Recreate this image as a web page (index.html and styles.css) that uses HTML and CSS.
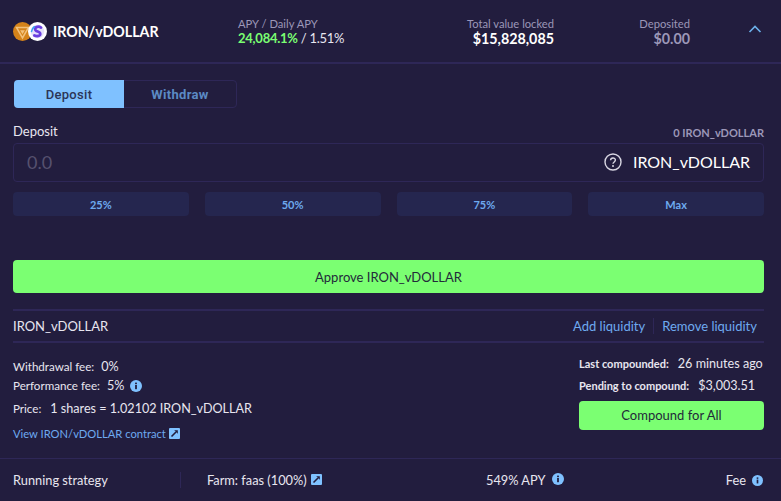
FILE: index.html
```html
<!DOCTYPE html>
<html lang="en">
<head>
  <meta charset="UTF-8">
  <title>IRON/vDOLLAR</title>
  <link rel="stylesheet" href="styles.css">
</head>
<body>
  <header class="vault-header">
    <div class="vault-name">
      <div class="token-icons">
        <svg class="token" viewBox="0 0 24 24" width="24" height="24">
          <circle cx="12" cy="12" r="12" fill="#d5831a"/>
          <path d="M4.500 7h15L12 20z" fill="none" stroke="#f3c27c" stroke-width="2"/>
          <path d="M9 10.500h6L12 15.500z" fill="#f3c27c"/>
        </svg>
        <svg class="token token-top" viewBox="0 0 24 24" width="24" height="24">
          <circle cx="12" cy="12" r="12" fill="#fff"/>
          <circle cx="12" cy="12" r="8.500" fill="#e4e0fb"/>
          <path d="M16.500 7c-3-2-7.500-1-7.500 2 0 3.500 6.500 2.500 6.500 6 0 2.500-4 3.500-7.500 2" fill="none" stroke="#6a3fe0" stroke-width="3.400" stroke-linecap="round"/>
          <path d="M4.500 12c.3-2.500 1.500-4.500 3.500-6" fill="none" stroke="#3aa0f0" stroke-width="2" stroke-linecap="round"/>
        </svg>
      </div>
      <span class="vault-title">IRON/vDOLLAR</span>
    </div>
    <div class="stat stat-apy">
      <span class="stat-label">APY / Daily APY</span>
      <span class="stat-value stat-value-small"><span class="green">24,084.1%</span> <span class="apy-rest">/ 1.51%</span></span>
    </div>
    <div class="stat stat-tvl">
      <span class="stat-label">Total value locked</span>
      <span class="stat-value">$15,828,085</span>
    </div>
    <div class="stat stat-deposited">
      <span class="stat-label">Deposited</span>
      <span class="stat-value muted">$0.00</span>
    </div>
    <svg class="chevron" viewBox="0 0 14 8" width="14" height="8">
      <path d="M1.500 7L7 1.500 12.500 7" fill="none" stroke="#6cb0ea" stroke-width="1.600"/>
    </svg>
  </header>

  <main class="vault-body">
    <div class="tabs">
      <div class="tab tab-active">Deposit</div>
      <div class="tab">Withdraw</div>
    </div>

    <div class="field-head">
      <span class="field-label">Deposit</span>
      <span class="field-balance">0 IRON_vDOLLAR</span>
    </div>
    <div class="amount-box">
      <span class="amount-placeholder">0.0</span>
      <div class="amount-token">
        <svg viewBox="0 0 18 18" width="18" height="18">
          <circle cx="9" cy="9" r="8" fill="none" stroke="#d8d6e2" stroke-width="1.400"/>
          <path d="M6.600 7.200c0-3 4.800-3 4.800-.1 0 1.900-2.400 1.800-2.400 3.700" fill="none" stroke="#d8d6e2" stroke-width="1.400"/>
          <circle cx="9" cy="13" r="1" fill="#d8d6e2"/>
        </svg>
        <span>IRON_vDOLLAR</span>
      </div>
    </div>
    <div class="percent-row">
      <div class="percent-btn">25%</div>
      <div class="percent-btn">50%</div>
      <div class="percent-btn">75%</div>
      <div class="percent-btn">Max</div>
    </div>

    <div class="approve-btn">Approve IRON_vDOLLAR</div>

    <div class="liquidity-row">
      <span>IRON_vDOLLAR</span>
      <div class="liquidity-links">
        <a href="#">Add liquidity</a>
        <a href="#">Remove liquidity</a>
      </div>
    </div>

    <div class="details">
      <div class="details-left">
        <div class="detail-line line-withdraw"><span class="detail-key">Withdrawal fee:</span><span class="detail-val">0%</span></div>
        <div class="detail-line line-perf">
          <span class="detail-key">Performance fee:</span><span class="detail-val">5%</span>
          <svg class="info-icon" viewBox="0 0 12 12" width="12" height="12"><circle cx="6" cy="6" r="6" fill="#7fc1ff"/><rect x="5.100" y="5" width="1.800" height="4.200" fill="#221d3e"/><rect x="5.100" y="2.600" width="1.800" height="1.600" fill="#221d3e"/></svg>
        </div>
        <div class="detail-line line-price"><span class="detail-key">Price:</span><span class="detail-val">1 shares = 1.02102 IRON_vDOLLAR</span></div>
        <a class="contract-link" href="#">View IRON/vDOLLAR contract
          <svg viewBox="0 0 11 11" width="11" height="11"><rect width="11" height="11" rx="1" fill="#7fc1ff"/><path d="M2.500 8.500L7 4" stroke="#221d3e" stroke-width="1.600"/><path d="M5.200 2.200h3.600v3.600z" fill="#221d3e"/></svg>
        </a>
      </div>
      <div class="details-right">
        <div class="detail-line right-line"><span class="detail-key">Last compounded:</span><span class="detail-val">26 minutes ago</span></div>
        <div class="detail-line right-line"><span class="detail-key">Pending to compound:</span><span class="detail-val">$3,003.51</span></div>
        <div class="compound-btn">Compound for All</div>
      </div>
    </div>
  </main>

  <footer class="strategy-row">
    <span class="strategy-name">Running strategy</span>
    <span class="strategy-farm">Farm: faas (100%)
      <svg viewBox="0 0 11 11" width="11" height="11"><rect width="11" height="11" rx="1" fill="#7fc1ff"/><path d="M2.500 8.500L7 4" stroke="#221d3e" stroke-width="1.600"/><path d="M5.200 2.200h3.600v3.600z" fill="#221d3e"/></svg>
    </span>
    <span class="strategy-apy">549% APY
      <svg class="info-icon" viewBox="0 0 12 12" width="12" height="12"><circle cx="6" cy="6" r="6" fill="#7fc1ff"/><rect x="5.100" y="5" width="1.800" height="4.200" fill="#221d3e"/><rect x="5.100" y="2.600" width="1.800" height="1.600" fill="#221d3e"/></svg>
    </span>
    <span class="strategy-fee">Fee
      <svg class="info-icon" viewBox="0 0 12 12" width="11" height="11"><circle cx="6" cy="6" r="6" fill="#7fc1ff"/><rect x="5.100" y="5" width="1.800" height="4.200" fill="#221d3e"/><rect x="5.100" y="2.600" width="1.800" height="1.600" fill="#221d3e"/></svg>
    </span>
  </footer>
</body>
</html>
```

FILE: styles.css
```css
:root {
  --bg: #221d3e;
  --line: #2e2757;
  --blue: #7fc1ff;
  --link: #6eaaf0;
  --green: #7bff72;
  --text: #e8e6f0;
  --muted: #9c97b8;
}

* {
  box-sizing: border-box;
  margin: 0;
  padding: 0;
}

html, body {
  height: 501px;
  overflow: hidden;
}

body {
  font-family: 'Lato', sans-serif;
  background: var(--bg);
  color: var(--text);
  font-size: 13px;
}

a {
  color: var(--link);
  text-decoration: none;
}

.vault-header {
  display: flex;
  align-items: center;
  height: 64px;
  border-bottom: 2px solid var(--line);
}

.vault-name {
  display: flex;
  align-items: center;
  width: 238px;
  padding-left: 13px;
}

.token-icons {
  display: flex;
  margin-right: 6px;
}

.token {
  display: block;
  width: 19px;
  height: 19px;
}

.token-top {
  margin-left: -4px;
}

.vault-title {
  font-size: 14.2px;
  font-weight: 700;
  color: #fff;
}

.stat {
  display: flex;
  flex-direction: column;
  line-height: 15px;
  white-space: nowrap;
}

.stat-label {
  font-size: 11.2px;
  color: var(--muted);
}

.stat-value {
  font-size: 14.3px;
  font-weight: 700;
  color: #fff;
}

.stat-value-small {
  font-size: 13px;
  letter-spacing: -0.25px;
}

.stat-value.muted {
  color: var(--muted);
}

.green {
  color: var(--green);
}

.apy-rest {
  font-weight: 400;
  color: var(--text);
}

.stat-apy {
  width: 229px;
}

.stat-tvl {
  width: 87px;
  align-items: flex-end;
}

.stat-deposited {
  width: 136px;
  align-items: flex-end;
}

.chevron {
  margin-left: 58px;
  margin-top: -4px;
}

.vault-body {
  padding: 16px 17px 0 13px;
}

.tabs {
  display: flex;
  width: 223px;
  height: 28px;
  margin-left: 1px;
  border: 1px solid var(--line);
  border-radius: 4px;
}

.tab {
  display: flex;
  align-items: center;
  justify-content: center;
  flex: 1;
  font-family: 'Roboto', sans-serif;
  font-size: 13px;
  font-weight: 700;
  letter-spacing: 0.3px;
  color: #5b8ac4;
}

.tab-active {
  width: 110px;
  flex: none;
  margin: -1px 0 -1px -1px;
  border-radius: 4px 0 0 4px;
  background: var(--blue);
  color: #2b3557;
  font-weight: 500;
}

.field-head {
  display: flex;
  align-items: flex-end;
  justify-content: space-between;
  height: 16px;
  margin-top: 15px;
}

.field-label {
  font-size: 13px;
  line-height: 16px;
}

.field-balance {
  font-size: 11px;
  font-weight: 700;
  color: var(--muted);
}

.amount-box {
  display: flex;
  align-items: center;
  justify-content: space-between;
  height: 39px;
  margin-top: 4px;
  padding: 0 13px 2px;
  border: 1px solid var(--line);
  border-radius: 4px;
}

.amount-placeholder {
  font-size: 18px;
  color: #56516e;
}

.amount-token {
  display: flex;
  align-items: center;
  gap: 11px;
  font-size: 16px;
  color: #fff;
}

.percent-row {
  display: grid;
  grid-template-columns: repeat(4, 1fr);
  gap: 16px;
  margin-top: 10px;
}

.percent-btn {
  height: 24px;
  line-height: 26px;
  text-align: center;
  border-radius: 4px;
  background: #25264f;
  font-size: 11px;
  font-weight: 700;
  color: var(--link);
}

.approve-btn {
  height: 33px;
  margin-top: 44px;
  line-height: 35px;
  text-align: center;
  border-radius: 4px;
  background: var(--green);
  color: #232a3a;
  font-size: 13px;
}

.liquidity-row {
  display: flex;
  align-items: center;
  justify-content: space-between;
  height: 34px;
  margin-top: 16px;
  border-top: 2px solid var(--line);
  border-bottom: 2px solid var(--line);
  font-size: 13px;
}

.liquidity-links {
  display: flex;
  padding-right: 7px;
}

.liquidity-links a + a {
  margin-left: 8px;
  padding-left: 8px;
  border-left: 1px solid var(--line);
}

.details {
  display: flex;
  justify-content: space-between;
  padding-top: 13px;
}

.detail-line {
  display: flex;
  align-items: center;
  white-space: nowrap;
}

.detail-key {
  font-size: 11.6px;
  margin-right: 7px;
}

.detail-val {
  font-size: 12.6px;
}

.line-withdraw {
  height: 20px;
}

.line-perf {
  height: 19px;
}

.line-perf .info-icon {
  margin-left: 6px;
}

.line-price {
  height: 27px;
}

.line-price .detail-key {
  margin-right: 9px;
}

.contract-link {
  display: flex;
  align-items: center;
  gap: 3px;
  height: 22px;
  font-size: 11.2px;
}

.details-right {
  width: 185px;
  margin-top: -4px;
}

.right-line {
  height: 22px;
}

.right-line .detail-key {
  font-weight: 700;
  font-size: 11px;
  margin-right: 9px;
}

.compound-btn {
  height: 29px;
  margin-top: 5px;
  line-height: 29px;
  text-align: center;
  border-radius: 4px;
  background: var(--green);
  color: #232a3a;
  font-size: 13px;
}

.strategy-row {
  display: flex;
  align-items: center;
  height: 43px;
  margin-top: 14px;
  padding: 0 18px 0 13px;
  border-top: 1px solid var(--line);
  font-size: 12.8px;
}

.strategy-name {
  width: 168px;
  border-right: 1px solid var(--line);
  line-height: 16px;
}

.strategy-farm {
  display: flex;
  align-items: center;
  gap: 4px;
  margin-left: 26px;
  width: 279px;
}

.strategy-farm svg {
  margin-bottom: 1px;
}

.strategy-apy {
  display: flex;
  align-items: center;
  gap: 6px;
}

.strategy-apy svg {
  margin-bottom: 3px;
}

.strategy-fee {
  display: flex;
  align-items: center;
  gap: 6px;
  margin-left: auto;
}
```
